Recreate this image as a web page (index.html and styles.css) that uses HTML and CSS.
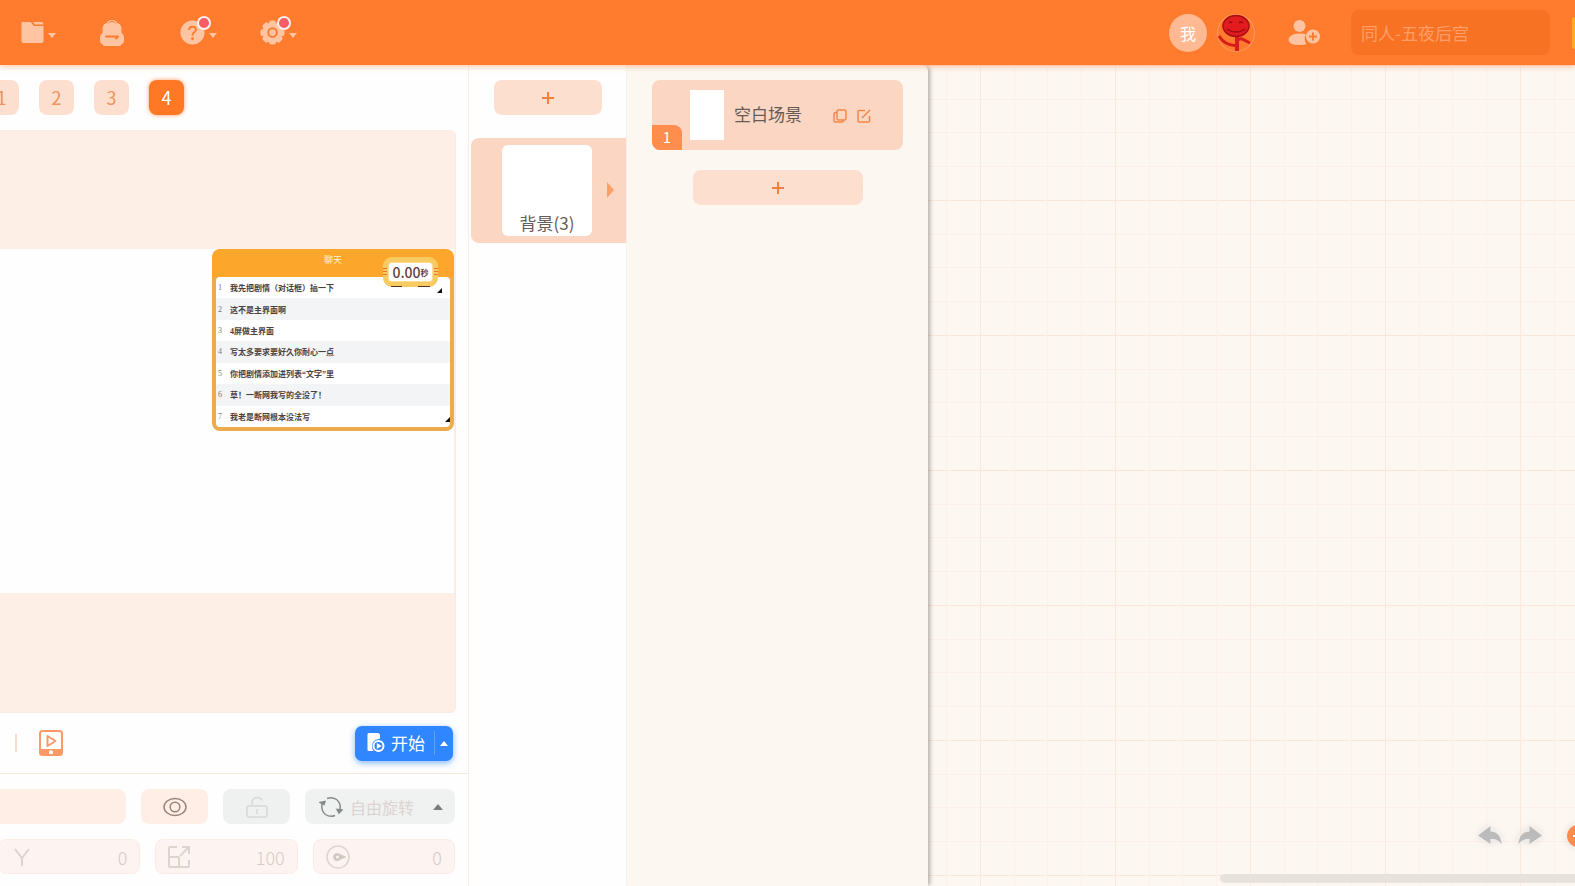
FILE: index.html
```html
<!DOCTYPE html>
<html lang="zh-CN">
<head>
<meta charset="utf-8">
<meta name="viewport" content="width=device-width, initial-scale=1">
<title>同人-五夜后宫</title>
<link rel="stylesheet" href="styles.css">
</head>
<body>
<div class="app">
  <header class="topbar">
    <nav class="menu" aria-label="主菜单">
      <button class="menu-item" aria-label="作品">
        <svg width="24" height="26" viewBox="0 0 24 26"><path class="tint" d="M2.500 2H10q1 0 2 1.500T14 6h9.500v15q0 2-2 2h-18q-2 0-2-2V3q0-1 1-1z"/><path class="tint" d="M13 2h8.500q2 0 2 2.500H15z"/></svg>
        <span class="caret"></span>
      </button>
      <button class="menu-item" aria-label="背包">
        <svg width="26" height="28" viewBox="0 0 26 28"><path class="tint" d="M8 4Q9 1 13 1t5 3q4 .500 4.500 6v4q2.500 1.500 2.500 4v3.500Q25 24 23 25l-2 2H5l-2-2q-2-1-2-3.500V18q0-2.500 2.500-4v-4Q4 4.500 8 4z"/><path class="cut" stroke-linecap="round" stroke-linejoin="round" d="M7 17.500h12l-2 2"/><path class="cut cut-thin" d="M9.500 4q1.500-1.500 3.500-1.500T16.500 4"/></svg>
      </button>
      <button class="menu-item" aria-label="帮助">
        <svg width="25" height="26" viewBox="0 0 26 26"><circle class="tint" cx="13" cy="12.500" r="12.500"/><path class="cut" d="M9.500 10q0-3.500 3.500-3.500t3.500 3q0 1.500-2 3-1.500 1-1.500 3"/><circle class="cut-fill" cx="13" cy="19" r="1.500"/></svg>
        <span class="caret"></span><i class="dot"></i>
      </button>
      <button class="menu-item" aria-label="设置">
        <svg width="25" height="26" viewBox="0 0 26 26"><g class="tint"><circle cx="13" cy="12.500" r="10.500"/><rect x="9.500" y="0" width="7" height="25" rx="2"/><rect x="9.500" y="0" width="7" height="25" rx="2" transform="rotate(45 13 12.500)"/><rect x="9.500" y="0" width="7" height="25" rx="2" transform="rotate(90 13 12.500)"/><rect x="9.500" y="0" width="7" height="25" rx="2" transform="rotate(135 13 12.500)"/></g><circle class="cut" cx="13" cy="12.500" r="4.500"/></svg>
        <span class="caret"></span><i class="dot"></i>
      </button>
    </nav>
    <div class="account">
      <button class="avatar avatar-me">我</button>
      <button class="avatar avatar-pic" aria-label="协作者">
        <svg width="38" height="38" viewBox="0 0 38 38"><g fill="none" stroke="#d91c1c" stroke-width="3"><path d="M20 21v16" stroke-width="4"/><path d="M20 32Q7 31 2 22M20 27q2-3 5-2l8 4"/></g><ellipse cx="19" cy="12" rx="13" ry="10.500" fill="#e31b1f" stroke="#a80f14" stroke-width="1.500"/><path d="M10 15q4 3 9 3t9-3M12 9q1-2 3 0M22 9q2-2 4 0" fill="none" stroke="#970d12" stroke-width="1.500"/></svg>
      </button>
      <button class="invite" aria-label="邀请">
        <svg width="32" height="28" viewBox="0 0 32 28"><circle class="tint" cx="11.500" cy="7" r="6"/><path class="tint" d="M.500 21q0-6 11-6.500 4 0 6.500 1-3 5 .500 9.500-2 1-7 1-11 0-11-5z"/><circle class="tint" cx="25" cy="17.500" r="7"/><path class="cut" d="M21 17.500h8M25 13.500v8"/></svg>
      </button>
      <input class="work-name" type="text" placeholder="同人-五夜后宫" aria-label="作品名">
      <button class="publish" aria-label="发布"></button>
    </div>
  </header>

  <main class="workspace">
    <section class="player">
      <div class="tabs">
        <button class="tab">1</button><button class="tab">2</button><button class="tab">3</button><button class="tab tab-on">4</button>
      </div>
      <div class="stage">
        <div class="screen">
          <section class="chat">
            <h2 class="chat-title">聊天</h2>
            <ol class="chat-rows">
              <li><span>1</span>我先把剧情（对话框）搞一下</li>
              <li><span>2</span>这不是主界面啊</li>
              <li><span>3</span>4屏做主界面</li>
              <li><span>4</span>写太多要求要好久你耐心一点</li>
              <li><span>5</span>你把剧情添加进列表“文字”里</li>
              <li><span>6</span>草！一断网我写的全没了！</li>
              <li><span>7</span>我老是断网根本没法写</li>
            </ol>
            <i class="grip grip-timer"></i><i class="grip grip-list"></i>
            <div class="timer"><b>0.00</b><small>秒</small></div>
          </section>
        </div>
      </div>
      <div class="controls">
        <i class="divider"></i>
        <button class="preview" aria-label="预览">
          <svg width="24" height="26" viewBox="0 0 24 26"><path fill="none" stroke="#fb9a68" stroke-width="2" d="M3.500 1h17q2.500 0 2.500 2.500v19q0 2.500-2.500 2.500h-17Q1 25 1 22.500v-19Q1 1 3.500 1z"/><path fill="#fb9a68" d="M1 19h22v4q0 2-2 2H3q-2 0-2-2z"/><path fill="none" stroke="#fb9a68" stroke-width="2" stroke-linejoin="round" d="M8.500 6v10l8-5z"/><rect x="10" y="20.500" width="4" height="3.500" rx="1" fill="#fff"/></svg>
        </button>
        <div class="start">
          <button class="start-main">
            <svg width="18" height="20" viewBox="0 0 18 20"><path fill="#fff" d="M2 0h8.500Q13 0 13 2.500v3.300Q5 6.500 5 13q0 3 1.500 5H2q-1.500 0-1.500-1.500v-15Q.500 0 2 0z"/><circle cx="11.500" cy="13" r="5" fill="none" stroke="#fff" stroke-width="2"/><path fill="#fff" d="M9.800 10v6l5-3z"/></svg>
            开始
          </button>
          <button class="start-more" aria-label="更多"><span class="caret-up"></span></button>
        </div>
      </div>
      <div class="props">
        <div class="prop-row">
          <input class="prop-name" type="text" aria-label="名称">
          <button class="prop-btn" aria-label="显示">
            <svg width="24" height="20" viewBox="0 0 24 20" fill="none" stroke="#9a8378" stroke-width="1.500"><ellipse cx="12" cy="10" rx="11" ry="8.500"/><circle cx="12" cy="10" r="4.800"/></svg>
          </button>
          <button class="prop-btn prop-btn-gray" aria-label="锁定">
            <svg width="22" height="22" viewBox="0 0 22 22" fill="none" stroke="#d6d8da" stroke-width="1.500"><rect x="1" y="10" width="20" height="11" rx="2"/><path d="M6 10V7q0-5 5-5.500 4 0 5 3M11 13v5"/></svg>
          </button>
          <button class="prop-rotate">
            <svg width="24" height="22" viewBox="0 0 24 22" fill="none" stroke="#858b89" stroke-width="1.500"><path d="M8 2.500q5-2 9.500 1Q22 7 21 13M16 19.500q-5 2-9.500-1Q2 15 3 8"/><path fill="#858b89" d="M1 6.500l5-1-1 3zM18 13.500l5 .500-3 3z"/></svg>
            <span>自由旋转</span><i class="caret-up"></i>
          </button>
        </div>
        <div class="prop-row prop-row-nums">
          <label class="num">
            <svg width="22" height="22" viewBox="0 0 22 22" fill="none" stroke="#dfd3ce" stroke-width="2"><path d="M4 3l7 9 7-9M11 12v8"/></svg>
            <input type="text" value="0" aria-label="Y" disabled>
          </label>
          <label class="num">
            <svg width="22" height="22" viewBox="0 0 22 22" fill="none" stroke="#dfd3ce" stroke-width="2"><path d="M9 1H2q-1 0-1 1v18q0 1 1 1h18q1 0 1-1v-6M1 11h9q1 0 1 1v9M12 10l8-8M14 1h7v7"/></svg>
            <input type="text" value="100" aria-label="大小" disabled>
          </label>
          <label class="num">
            <svg width="24" height="24" viewBox="0 0 24 24"><circle cx="12" cy="12" r="11" fill="none" stroke="#dfd3ce" stroke-width="1.500"/><path fill="#d3c7c2" d="M20.500 12L13 15.500a4 4 0 1 1 0-7z"/><circle cx="11.500" cy="12" r="1.500" fill="#fdf3f0"/></svg>
            <input type="text" value="0" aria-label="方向" disabled>
          </label>
        </div>
      </div>
    </section>

    <section class="actors">
      <button class="add" aria-label="添加角色"><svg width="12" height="12" viewBox="0 0 12 12"><path d="M0 6h12M6 0v12"/></svg></button>
      <button class="actor">
        <span class="actor-card">背景(3)</span>
        <i class="caret-right"></i>
      </button>
    </section>

    <section class="scenes">
      <article class="scene">
        <span class="scene-thumb"></span>
        <span class="scene-name">空白场景</span>
        <button class="scene-tool" aria-label="复制"><svg width="14" height="14" viewBox="0 0 14 14"><rect x="4" y="1" width="9" height="10" rx="1.500"/><path d="M4 3.500H2.500Q1 3.500 1 5v6.500Q1 13 2.500 13H9q1.500 0 1.500-2"/></svg></button>
        <button class="scene-tool" aria-label="编辑"><svg width="14" height="14" viewBox="0 0 14 14"><path d="M8 1.500H2Q1 1.500 1 2.500V12q0 1 1 1h9.500q1 0 1-1V7M5 9l8-8"/></svg></button>
        <span class="scene-no">1</span>
      </article>
      <button class="add add-wide" aria-label="添加场景"><svg width="12" height="12" viewBox="0 0 12 12"><path d="M0 6h12M6 0v12"/></svg></button>
    </section>

    <section class="canvas">
      <div class="history">
        <button aria-label="撤销"><svg width="24" height="20" viewBox="0 0 24 20"><path d="M0 9.500L12.500 0v5.500Q23 6 23.500 18.500q-3-6-11-5.500v5z"/></svg></button>
        <button aria-label="重做"><svg width="24" height="20" viewBox="0 0 24 20"><path d="M24 9.500L11.500 0v5.500Q1 6 .500 18.500q3-6 11-5.500v5z"/></svg></button>
        <button class="zoom" aria-label="缩小"><svg width="22" height="22" viewBox="0 0 22 22"><circle cx="11" cy="11" r="11" fill="#fd8c4c"/><path d="M6 10h10v2H6z" fill="#fff"/></svg></button>
      </div>
      <div class="scrollbar"></div>
    </section>
  </main>
</div>
</body>
</html>
```
FILE: styles.css
```css
* { box-sizing: border-box; }

body {
  margin: 0;
  font-family: "Noto Sans CJK SC", sans-serif;
  color: #665b56;
}

button, input {
  font: inherit;
  color: inherit;
  border: 0;
  padding: 0;
  margin: 0;
  background: none;
}

button { cursor: pointer; }
svg { display: block; flex: none; }

.app {
  height: 100vh;
  display: flex;
  flex-direction: column;
  overflow: hidden;
}

/* Top bar */
.topbar {
  position: relative;
  z-index: 3;
  flex: none;
  height: 65px;
  padding-left: 20px;
  display: flex;
  align-items: center;
  justify-content: space-between;
  background: #ff7b2e;
  box-shadow: 0 1px 6px rgba(255, 123, 46, .5);
}

.menu { display: flex; gap: 43px; }

.menu-item {
  position: relative;
  display: flex;
  align-items: center;
  gap: 4px;
}

.menu-item:nth-child(3) { margin-left: 12px; }

.tint { fill: #ffc5a3; }
.cut { fill: none; stroke: #ff7b2e; stroke-width: 2; }
.cut-thin { stroke-width: 1; }
.cut-fill { fill: #ff7b2e; }

.caret {
  margin-top: 6px;
  border: 4px solid transparent;
  border-top: 5px solid #ffc5a3;
  border-bottom: 0;
}

.dot {
  position: absolute;
  left: 17px;
  top: -3px;
  width: 14px;
  height: 14px;
  border: 2px solid #fff0ef;
  border-radius: 50%;
  background: #f65b66;
}

.account { display: flex; align-items: center; }

.avatar {
  width: 38px;
  height: 38px;
  border-radius: 50%;
  color: #fff;
  font-size: 16px;
  overflow: hidden;
}

.avatar-me { background: #ffb993; }
.avatar-pic { margin-left: 10px; box-shadow: inset 0 0 0 1px #ff9a5f; }
.invite { margin-left: 33px; }

.work-name {
  width: 199px;
  height: 45px;
  margin-left: 31px;
  padding: 0 10px;
  border-radius: 8px;
  background: #f87224;
  font-size: 17px;
}

.work-name::placeholder { color: #ff9e66; opacity: 1; }

.publish {
  width: 3px;
  height: 32px;
  margin-left: 22px;
  border-radius: 3px 0 0 3px;
  background: #ffae1c;
}

/* Workspace */
.workspace { flex: 1; min-height: 0; display: flex; background: #fdf7f2; }

.player {
  flex: none;
  width: 469px;
  display: flex;
  flex-direction: column;
  background: #fefefe;
  border-right: 1px solid #f8efe8;
  overflow: hidden;
}

.tabs {
  display: flex;
  gap: 20px;
  margin-left: -16px;
  padding: 15px 0;
}

.tab {
  width: 35px;
  height: 35px;
  border-radius: 8px;
  background: #fddfcf;
  color: #f0935c;
  font-size: 18px;
  line-height: 35px;
}

.tab-on {
  background: #ff7826;
  color: #fff;
  box-shadow: 0 0 4px #ff9a60;
}

.stage {
  flex: 1;
  margin-right: 12px;
  padding: 118px 1px 119px 0;
  display: flex;
  border: 1px solid #faebe2;
  border-left: 0;
  border-radius: 0 6px 6px 0;
  background: #fdefe6;
}

.screen { position: relative; flex: 1; background: #fefefe; }

.chat {
  position: absolute;
  right: 0;
  top: 0;
  width: 242px;
  height: 182px;
  padding: 0 4px 4px;
  display: flex;
  flex-direction: column;
  border-radius: 8px;
  background: #ecac4e;
  background-image: linear-gradient(#fda62c 28px, transparent 28px);
}

.chat-title {
  margin: 0;
  height: 28px;
  font-size: 9px;
  font-weight: 400;
  line-height: 21px;
  text-align: center;
  color: #fff3cf;
}

.chat-rows {
  flex: 1;
  margin: 0;
  padding: 0;
  display: grid;
  grid-template-rows: repeat(7, 1fr);
  list-style: none;
  border-radius: 4px;
  overflow: hidden;
  background: #fff;
  font-family: "Liberation Serif", "Noto Sans CJK SC", serif;
  font-size: 8px;
  font-weight: 700;
  color: #4c403c;
}

.chat-rows li { display: flex; align-items: center; white-space: nowrap; }
.chat-rows li:nth-child(even) { background: #f2f4f5; }
.chat-rows span { width: 14px; padding-left: 2px; font-weight: 400; color: #777; }

.grip {
  position: absolute;
  border-left: 5px solid transparent;
  border-bottom: 5px solid #111;
}

.grip-timer { right: 12px; top: 39px; }
.grip-list { right: 4px; top: 168px; }

.timer {
  position: absolute;
  right: 16px;
  top: 8px;
  width: 55px;
  height: 30px;
  display: flex;
  align-items: center;
  justify-content: center;
  border: 5px solid #f8cb62;
  border-radius: 9px;
  background: linear-gradient(#fff, #fff) padding-box;
  color: #633c40;
  white-space: nowrap;
  box-shadow: inset 0 0 0 1px #fbdc93;
}

.timer::before {
  content: "";
  position: absolute;
  inset: 6px -5px;
  background:
    repeating-linear-gradient(#e8703c 0 1px, transparent 1px 3px) 0 0 / 4px 100% no-repeat,
    repeating-linear-gradient(#e8703c 0 1px, transparent 1px 3px) 100% 0 / 4px 100% no-repeat;
}

/* Feet of the timer */
.timer::after {
  content: "";
  position: absolute;
  left: 3px;
  right: 3px;
  bottom: -5px;
  height: 1px;
  background: linear-gradient(90deg, #4d3325 11px, transparent 11px 27px, #4d3325 27px);
}

.timer b { font-size: 14px; font-weight: 500; line-height: 20px; }
.timer small { font-size: 8px; font-weight: 700; }

.controls {
  flex: none;
  height: 61px;
  padding: 0 15px;
  display: flex;
  align-items: center;
  border-bottom: 1px solid #f6e8da;
}

.divider { width: 2px; height: 18px; background: #fadcc8; }
.preview { margin-left: 22px; }

.start {
  width: 98px;
  height: 35px;
  margin-left: auto;
  display: flex;
  align-items: center;
  border-radius: 7px;
  background: #2f86ff;
  box-shadow: 0 2px 6px rgba(47, 134, 255, .6);
  color: #fff;
}

.start-main {
  flex: 1;
  padding-left: 12px;
  display: flex;
  align-items: center;
  gap: 6px;
  font-size: 17px;
  line-height: 24px;
  white-space: nowrap;
}

.start-more {
  width: 19px;
  height: 24px;
  display: grid;
  place-items: center;
  border-left: 1px solid #5da1ff;
}

.caret-up {
  border: 4px solid transparent;
  border-top: 0;
  border-bottom: 5px solid currentColor;
}

.props {
  flex: none;
  padding: 15px 13px 12px 0;
  display: flex;
  flex-direction: column;
  gap: 15px;
}

.prop-row { display: flex; gap: 15px; height: 35px; }
.prop-row-nums { margin-left: -2px; }

.prop-name {
  flex: 1;
  min-width: 0;
  border-radius: 0 8px 8px 0;
  background: #feeee5;
}

.prop-btn {
  width: 67px;
  display: grid;
  place-items: center;
  border-radius: 8px;
  background: #feeee5;
}

.prop-btn-gray { background: #eff0f0; }

.prop-rotate {
  width: 150px;
  padding: 0 12px 0 14px;
  display: flex;
  align-items: center;
  gap: 7px;
  border-radius: 8px;
  background: #f0f2f1;
  color: #dcd4d1;
  font-size: 16px;
  line-height: 22px;
}

.prop-rotate .caret-up { margin-left: auto; border-width: 0 5px 6px; color: #7c7c7c; }

.num {
  flex: 1;
  min-width: 0;
  padding: 0 12px;
  display: flex;
  align-items: center;
  border: 1px solid #fbece7;
  border-radius: 8px;
  background: #fdf4f1;
}

.num input {
  flex: 1;
  min-width: 0;
  text-align: right;
  font-size: 18px;
  font-weight: 300;
  color: #d8cbc6;
}

/* Actor column */
.actors {
  flex: none;
  width: 158px;
  padding: 15px 0 0 2px;
  display: flex;
  flex-direction: column;
  align-items: center;
  gap: 23px;
  background: #fefefe;
  border-right: 1px solid #f9f2ec;
}

.add {
  width: 108px;
  height: 35px;
  display: grid;
  place-items: center;
  border-radius: 8px;
  background: #fddfcf;
}

.add path { stroke: #f5803a; stroke-width: 2; }
.actors .add { margin-right: 2px; }

.actor {
  position: relative;
  align-self: stretch;
  height: 105px;
  display: grid;
  place-items: center;
  padding-right: 3px;
  border-radius: 8px 0 0 8px;
  background: #fbd7c3;
}

.actor-card {
  width: 90px;
  height: 91px;
  display: flex;
  align-items: flex-end;
  justify-content: center;
  border-radius: 6px;
  background: #fff;
  font-size: 17px;
  line-height: 26px;
}

.caret-right {
  position: absolute;
  right: 12px;
  top: 44px;
  border: 8px solid transparent;
  border-left: 7px solid #fe9e69;
  border-right: 0;
}

/* Scene column */
.scenes {
  position: relative;
  z-index: 2;
  flex: none;
  width: 301px;
  padding: 15px 25px 0;
  display: flex;
  flex-direction: column;
  align-items: center;
  gap: 20px;
  background: #fdf7f2;
  border-radius: 0 6px 0 0;
  box-shadow: 3px 0 4px -1px rgba(0, 0, 0, .3);
}

.scene {
  position: relative;
  align-self: stretch;
  height: 70px;
  padding: 0 32px 0 38px;
  display: flex;
  align-items: center;
  border-radius: 8px;
  background: #fbd7c3;
  overflow: hidden;
}

.scene-thumb { width: 34px; height: 50px; background: #fff; }
.scene-name { margin: 0 auto 2px 10px; font-size: 17px; line-height: 24px; }
.scene-tool { margin: 2px 0 0 10px; }
.scene-tool svg { fill: none; stroke: #f78748; stroke-width: 1.5; }

.scene-no {
  position: absolute;
  left: 0;
  bottom: 0;
  width: 30px;
  height: 25px;
  border-radius: 0 8px 0 0;
  background: #ff8d4d;
  color: #fff;
  font-size: 15px;
  line-height: 24px;
  text-align: center;
}

.add-wide { width: 170px; }

/* Block canvas: one strong line every 135px, three faint ones between */
.canvas {
  position: relative;
  flex: 1;
  min-width: 0;
  overflow: hidden;
  background-color: #fdf7f2;
  background-image:
    linear-gradient(90deg, #fbeadc 1px, transparent 1px 34px, #fcf0e8 34px 35px, transparent 35px 67px, #fcf0e8 67px 68px, transparent 68px 101px, #fcf0e8 101px 102px, transparent 102px),
    linear-gradient(#fbe5d8 1px, transparent 1px 34px, #fcefe6 34px 35px, transparent 35px 67px, #fcefe6 67px 68px, transparent 68px 101px, #fcefe6 101px 102px, transparent 102px);
  background-size: 135px 135px;
  background-position: 52px 0, 0 135px;
}

.history {
  position: absolute;
  right: -14px;
  bottom: 39px;
  display: flex;
  align-items: center;
  gap: 16px;
}

.history svg {
  fill: #bbb;
  filter: drop-shadow(0 0 2px #fff) drop-shadow(0 0 3px rgba(0, 0, 0, .15));
}

.history .zoom { margin-left: 9px; }

.scrollbar {
  position: absolute;
  left: 292px;
  right: 0;
  bottom: 3px;
  height: 9px;
  border-radius: 5px 0 0 5px;
  background: #e8e2dd;
}
```
